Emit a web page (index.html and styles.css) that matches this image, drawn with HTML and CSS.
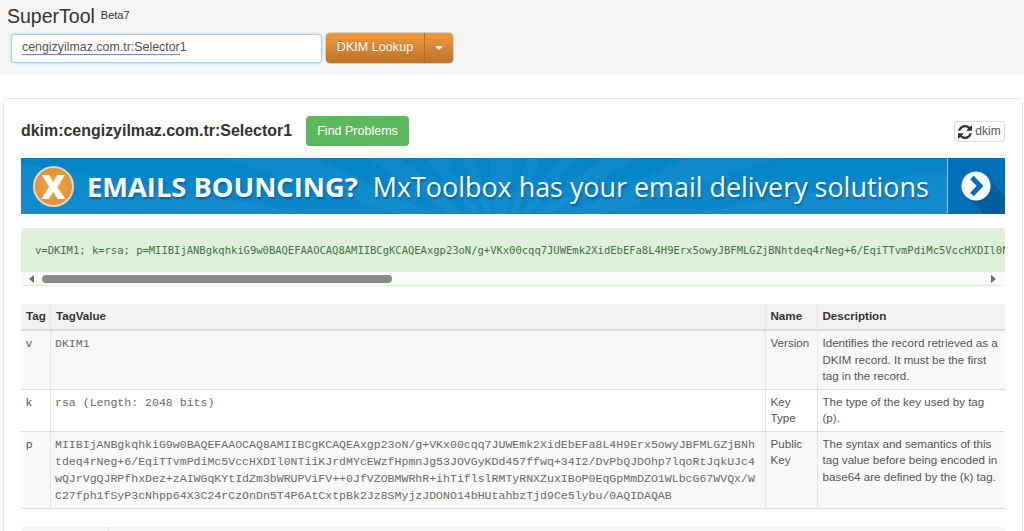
FILE: index.html
```html
<!DOCTYPE html>
<html lang="en">
<head>
<meta charset="utf-8">
<title>SuperTool</title>
<link rel="stylesheet" href="styles.css">
</head>
<body>
<header class="top">
  <div class="brand"><span class="brand-name">SuperTool</span><span class="beta">Beta7</span></div>
  <form class="search">
    <div class="search-input"><span class="search-text"><span class="typed">cengizyilmaz.com.tr:Selector</span>1</span></div>
    <div class="split">
      <span class="btn-main">DKIM Lookup</span>
      <span class="btn-caret"><i class="caret"></i></span>
    </div>
  </form>
</header>
<main class="panel">
  <div class="title-row">
    <h1 class="title">dkim:cengizyilmaz.com.tr:Selector1</h1>
    <span class="btn-green">Find Problems</span>
    <span class="btn-refresh">
      <svg class="refresh-icon" viewBox="0 0 1536 1536"><path d="M1511 928q0 5-1 7-64 268-268 434.5t-478 166.5q-146 0-282.5-55t-243.5-157l-129 129q-19 19-45 19t-45-19-19-45v-448q0-26 19-45t45-19h448q26 0 45 19t19 45-19 45l-137 137q71 66 161 102t187 36q134 0 250-65t186-179q11-17 53-117 8-23 30-23h192q13 0 22.5 9.5t9.5 22.5zm25-800v448q0 26-19 45t-45 19h-448q-26 0-45-19t-19-45 19-45l138-138q-148-137-349-137-134 0-250 65t-186 179q-11 17-53 117-8 23-30 23h-199q-13 0-22.5-9.5t-9.5-22.5v-7q65-268 270-434.5t480-166.5q146 0 284 55.5t245 156.5l130-129q19-19 45-19t45 19 19 45z"/></svg>
      dkim
    </span>
  </div>
  <div class="banner">
    <div class="banner-main">
      <span class="logo"><span class="logo-x">X</span></span>
      <span class="banner-strong">EMAILS BOUNCING?</span>
      <span class="banner-light">MxToolbox has your email delivery solutions</span>
    </div>
    <div class="banner-go">
      <svg class="go-icon" viewBox="0 0 57 56">
        <polygon class="go-shadow" points="18,38 38,18 57,38 57,56 36,56"/>
        <circle class="go-circle" cx="28" cy="28" r="14.5"/>
        <polyline class="go-chevron" points="24,19.5 32,28 24,36.5"/>
      </svg>
    </div>
  </div>
  <div class="record">
    <pre class="record-text">v=DKIM1; k=rsa; p=MIIBIjANBgkqhkiG9w0BAQEFAAOCAQ8AMIIBCgKCAQEAxgp23oN/g+VKx00cqq7JUWEmk2XidEbEFa8L4H9Erx5owyJBFMLGZjBNhtdeq4rNeg+6/EqiTTvmPdiMc5VccHXDIl0NTiiKJrdMYcEWzfHpmnJg53JOVGyKDd457ffwq+34I2/DvPbQJDOhp7lqoRtJqkUJc4wQJrVgQJRPfhxDez+zAIWGqKYtIdZm3bWRUPViFV++0JfVZOBMWRhR+ihTiflslRMTyRNXZuxIBoP0EqGpMmDZO1WLbcG67WVQx/WC27fph1fSyP3cNhpp64X3C24rCzOnDn5T4P6AtCxtpBk2Jz8SMyjzJDONO14bHUtahbzTjd9Ce5lybu/0AQIDAQAB</pre>
    <div class="scrollbar">
      <i class="arrow-left"></i>
      <span class="thumb"></span>
      <i class="arrow-right"></i>
    </div>
  </div>
  <table class="tags">
    <colgroup><col class="c-tag"><col class="c-value"><col class="c-name"><col class="c-desc"></colgroup>
    <thead>
      <tr><th>Tag</th><th>TagValue</th><th>Name</th><th>Description</th></tr>
    </thead>
    <tbody>
      <tr class="odd"><td>v</td><td class="mono">DKIM1</td><td>Version</td><td>Identifies the record retrieved as a DKIM record. It must be the first tag in the record.</td></tr>
      <tr><td>k</td><td class="mono">rsa (Length: 2048 bits)</td><td>Key Type</td><td>The type of the key used by tag (p).</td></tr>
      <tr class="odd"><td>p</td><td class="mono">MIIBIjANBgkqhkiG9w0BAQEFAAOCAQ8AMIIBCgKCAQEAxgp23oN/g+VKx00cqq7JUWEmk2XidEbEFa8L4H9Erx5owyJBFMLGZjBNhtdeq4rNeg+6/EqiTTvmPdiMc5VccHXDIl0NTiiKJrdMYcEWzfHpmnJg53JOVGyKDd457ffwq+34I2/DvPbQJDOhp7lqoRtJqkUJc4wQJrVgQJRPfhxDez+zAIWGqKYtIdZm3bWRUPViFV++0JfVZOBMWRhR+ihTiflslRMTyRNXZuxIBoP0EqGpMmDZO1WLbcG67WVQx/WC27fph1fSyP3cNhpp64X3C24rCzOnDn5T4P6AtCxtpBk2Jz8SMyjzJDONO14bHUtahbzTjd9Ce5lybu/0AQIDAQAB</td><td>Public Key</td><td>The syntax and semantics of this tag value before being encoded in base64 are defined by the (k) tag.</td></tr>
    </tbody>
  </table>
  <div class="next-table"><span class="next-first"></span><span class="next-rest"></span></div>
</main>
</body>
</html>
```
FILE: styles.css
```css
* { box-sizing: border-box; }
html, body { height: 531px; overflow: hidden; }
body {
  margin: 0;
  background: #fff;
  color: #333;
  font-family: "Liberation Sans", Arial, sans-serif;
  font-size: 12px;
}

/* header */
.top {
  height: 75px;
  background: #f5f5f5;
  padding: 5px 7px 0;
}
.brand { display: flex; align-items: flex-start; height: 28px; }
.brand-name { font-size: 19.5px; line-height: 22px; color: #333; }
.beta { font-size: 11px; line-height: 12px; margin: 4px 0 0 6px; color: #333; }
.search { display: flex; margin-left: 4px; gap: 4px; }
.search-input {
  width: 311px;
  height: 29px;
  margin-top: 0.5px;
  background: #fff;
  border: 1px solid #a9cde9;
  border-radius: 4px;
  box-shadow: 0 0 3px rgba(102, 175, 233, .5);
  padding: 0 10px;
  line-height: 25px;
  font-size: 12.4px;
  color: #555;
}
.typed { border-bottom: 1px solid #6f84e6; }
.split {
  display: flex;
  height: 30px;
  border-radius: 4px;
  overflow: hidden;
  background: linear-gradient(#f19a3e, #bb722a);
  color: #fff;
  font-size: 12.6px;
  line-height: 29px;
  text-shadow: 0 -1px 0 rgba(0, 0, 0, .2);
  box-shadow: 0 0 0 0.5px rgba(180, 110, 40, .6);
}
.btn-main { width: 99px; text-align: center; border-right: 1px solid #b36d2a; }
.btn-caret { width: 28px; display: flex; align-items: center; justify-content: center; }
.caret {
  width: 0;
  height: 0;
  border-left: 4px solid transparent;
  border-right: 4px solid transparent;
  border-top: 4px solid #fff;
}

/* panel */
.panel {
  margin: 23px 1px 0 3px;
  border: 1px solid #e6e6e6;
  border-radius: 4px;
  padding: 0 17px;
}
.title-row {
  display: flex;
  align-items: flex-start;
  height: 57px;
  border-bottom: 1px solid #eee;
  margin-bottom: 2px;
}
.title {
  margin: 23px 0 0;
  font-size: 15.95px;
  line-height: 18px;
  font-weight: 700;
  color: #333;
}
.btn-green {
  margin: 17px 0 0 14px;
  width: 103px;
  height: 30px;
  border-radius: 4px;
  background: #5cb85c;
  color: #fff;
  font-size: 12.5px;
  line-height: 30px;
  text-align: center;
}
.btn-refresh {
  margin: 22px 0 0 auto;
  width: 51px;
  height: 21px;
  border: 1px solid #ddd;
  border-radius: 3px;
  background: #fff;
  color: #555;
  font-size: 12px;
  line-height: 19px;
  display: flex;
  align-items: center;
  justify-content: center;
  gap: 3px;
}
.refresh-icon { width: 14px; height: 14px; fill: #333; }

/* banner */
.banner {
  display: flex;
  height: 56px;
  background: #0a86c8;
}
.banner-main {
  flex: 1;
  display: flex;
  align-items: center;
  padding-left: 12px;
  color: #fff;
  text-shadow: 1px 2px 2px rgba(0, 50, 100, .45);
  background:
    repeating-conic-gradient(from 0deg at 480px 90px, rgba(255,255,255,.035) 0 8deg, rgba(255,255,255,0) 8deg 16deg),
    linear-gradient(#0484c8, #0a89cc);
}
.logo {
  width: 41px;
  height: 41px;
  border-radius: 50%;
  border: 2px solid #e4d6c2;
  background: radial-gradient(circle at 50% 50%, #f4ab4c, #d9882a);
  display: flex;
  align-items: center;
  justify-content: center;
  margin-right: 13px;
  flex: none;
}
.logo-x {
  font-family: "Open Sans", sans-serif;
  font-weight: 800;
  font-size: 33px;
  line-height: 1;
  text-shadow: none;
}
.banner-strong {
  font-family: "Open Sans", sans-serif;
  font-weight: 700;
  font-size: 27.3px;
  margin-right: 15px;
  white-space: nowrap;
}
.banner-light {
  font-family: "Open Sans", sans-serif;
  font-weight: 400;
  font-size: 26.9px;
  white-space: nowrap;
}
.banner-go {
  width: 58px;
  background: #0170b8;
  border-left: 1px solid #8cc4e4;
}
.go-icon { display: block; width: 57px; height: 56px; }
.go-shadow { fill: #025f9f; }
.go-circle { fill: #fff; }
.go-chevron { fill: none; stroke: #0170b8; stroke-width: 5; }

/* record */
.record {
  margin-top: 14px;
  height: 58px;
  border-radius: 4px;
  overflow: hidden;
  border-bottom: 1px solid #dff0d8;
}
.record-text {
  margin: 0;
  height: 44px;
  background: #dff0d8;
  color: #3c763d;
  font-family: "DejaVu Sans Mono", monospace;
  font-size: 10.5px;
  line-height: 44px;
  padding-left: 14px;
  overflow: hidden;
  white-space: pre;
}
.scrollbar {
  height: 13px;
  background: #fafafa;
  display: flex;
  align-items: center;
  padding: 0 3px 0 8px;
}
.arrow-left {
  width: 0;
  height: 0;
  border-top: 4px solid transparent;
  border-bottom: 4px solid transparent;
  border-right: 5px solid #6d6d6d;
}
.thumb {
  width: 350px;
  height: 8px;
  margin-left: 8px;
  border-radius: 4px;
  background: #8a8a8a;
}
.arrow-right {
  width: 0;
  height: 0;
  margin-left: auto;
  margin-right: 6px;
  border-top: 4px solid transparent;
  border-bottom: 4px solid transparent;
  border-left: 5px solid #6d6d6d;
}

/* table */
.tags {
  width: 100%;
  margin-top: 18px;
  table-layout: fixed;
  border-collapse: collapse;
  font-size: 11.6px;
  line-height: 16.5px;
  color: #555;
}
.c-tag { width: 29.5px; }
.c-name { width: 52px; }
.c-desc { width: 188px; }
.tags th {
  height: 26px;
  padding: 4px 5px;
  text-align: left;
  font-weight: 700;
  background: #f2f2f2;
  color: #333;
  border-right: 1px solid #e4e4e4;
  border-bottom: 2px solid #ddd;
}
.tags td {
  padding: 4px 5px;
  vertical-align: top;
  border-right: 1px solid #e4e4e4;
  border-bottom: 1px solid #ddd;
}
.tags th:last-child, .tags td:last-child { border-right: 0; }
.tags tr.odd td { background: #f9f9f9; }
.tags td.mono {
  font-family: "Liberation Mono", "Courier New", monospace;
  font-size: 11.55px;
  line-height: 17px;
  word-break: break-all;
  padding-left: 4px;
  color: #6a6a6a;
}
.next-table {
  display: flex;
  height: 26px;
  margin-top: 18px;
  background: #f5f5f5;
}
.next-first { width: 87.5px; border-right: 1px solid #e4e4e4; }
.next-rest { flex: 1; }
```
